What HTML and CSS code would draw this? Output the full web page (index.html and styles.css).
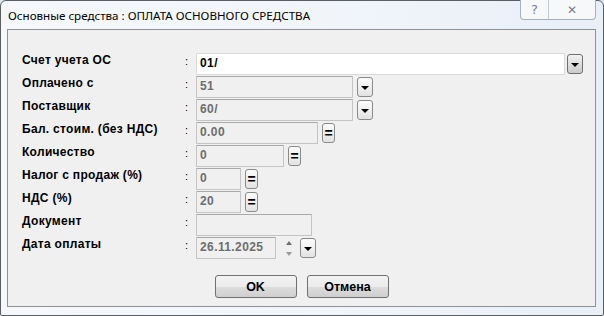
FILE: index.html
```html
<!DOCTYPE html>
<html lang="ru">
<head>
    <meta charset="UTF-8">
    <title>Основные средства : ОПЛАТА ОСНОВНОГО СРЕДСТВА</title>
    <link rel="stylesheet" href="styles.css">
</head>
<body>

<div class="window">
    <div class="titlebar">
        <span class="title">Основные средства : ОПЛАТА ОСНОВНОГО СРЕДСТВА</span>
        <div class="caption-buttons">
            <span class="cap-btn help">?</span>
            <span class="cap-btn close">✕</span>
        </div>
    </div>

    <div class="client">
        <div class="form">
            <div class="label">Счет учета ОС</div>
            <div class="colon">:</div>
            <div class="field">
                <div class="input active w-369">01/</div>
                <div class="btn drop dark gap2"><i class="tri"></i></div>
            </div>

            <div class="label">Оплачено с</div>
            <div class="colon">:</div>
            <div class="field">
                <div class="input w-157">51</div>
                <div class="btn drop"><i class="tri"></i></div>
            </div>

            <div class="label">Поставщик</div>
            <div class="colon">:</div>
            <div class="field">
                <div class="input w-157">60/</div>
                <div class="btn drop"><i class="tri"></i></div>
            </div>

            <div class="label">Бал. стоим. (без НДС)</div>
            <div class="colon">:</div>
            <div class="field">
                <div class="input w-122">0.00</div>
                <div class="btn calc">=</div>
            </div>

            <div class="label">Количество</div>
            <div class="colon">:</div>
            <div class="field">
                <div class="input w-88">0</div>
                <div class="btn calc">=</div>
            </div>

            <div class="label">Налог с продаж (%)</div>
            <div class="colon">:</div>
            <div class="field">
                <div class="input w-45">0</div>
                <div class="btn calc">=</div>
            </div>

            <div class="label">НДС (%)</div>
            <div class="colon">:</div>
            <div class="field">
                <div class="input w-45">20</div>
                <div class="btn calc">=</div>
            </div>

            <div class="label">Документ</div>
            <div class="colon">:</div>
            <div class="field">
                <div class="input w-116"></div>
            </div>

            <div class="label">Дата оплаты</div>
            <div class="colon">:</div>
            <div class="field">
                <div class="input w-80">26.11.2025</div>
                <div class="spin">
                    <i class="up"></i>
                    <i class="down"></i>
                </div>
                <div class="btn drop"><i class="tri"></i></div>
            </div>
        </div>

        <div class="actions">
            <button class="push">OK</button>
            <button class="push">Отмена</button>
        </div>
    </div>
</div>

</body>
</html>
```

FILE: styles.css
```css
html, body {
    margin: 0;
    padding: 0;
    background-color: #dde6ef;
}

.window {
    width: 604px;
    height: 316px;
    box-sizing: border-box;
    border: 1px solid #5a5f66;
    border-radius: 6px 6px 2px 2px;
    background: linear-gradient(to right, #f6f8fb 0%, #f1f5fa 55%, #e8eff7 100%);
    display: flex;
    flex-direction: column;
}

.titlebar {
    height: 28px;
    position: relative;
    display: flex;
    align-items: center;
}

.title {
    padding-left: 7px;
    padding-top: 1px;
    font-family: "Noto Sans", sans-serif;
    font-size: 11.6px;
    color: #000;
}

.caption-buttons {
    position: absolute;
    top: -1px;
    right: 7px;
    display: flex;
    height: 19px;
    border: 1px solid #a7b0bb;
    border-top: none;
    border-radius: 0 0 4px 4px;
    background-color: #f6f8fa;
}

.cap-btn {
    display: flex;
    align-items: center;
    justify-content: center;
    font-family: "DejaVu Sans", sans-serif;
    color: #7a7f86;
    font-size: 13px;
}

.help {
    width: 27px;
    border-right: 1px solid #c2c9d1;
}

.close {
    width: 46px;
    font-size: 12px;
}

.client {
    flex: 1;
    margin: 0 7px 8px 6px;
    border: 1px solid #8d9096;
    background-color: #f0f0f0;
    padding: 23px 0 0 14px;
}

.form {
    display: grid;
    grid-template-columns: 163px 11px 1fr;
    grid-auto-rows: 22px;
    row-gap: 1px;
}

.label {
    font-family: "Liberation Sans", Arial, sans-serif;
    font-weight: bold;
    font-size: 12px;
    letter-spacing: 0.3px;
    line-height: 14px;
    color: #000;
}

.colon {
    font-family: "Liberation Sans", Arial, sans-serif;
    font-size: 11px;
    line-height: 16px;
    color: #000;
}

.field {
    display: flex;
    align-items: center;
}

.input {
    box-sizing: border-box;
    height: 22px;
    border: 1px solid #c4c4c4;
    border-top-color: #a9a9a9;
    border-radius: 1px;
    background-color: #f0f0f0;
    padding: 0 3px;
    font-family: "Liberation Sans", Arial, sans-serif;
    font-weight: bold;
    font-size: 12px;
    letter-spacing: 0.4px;
    line-height: 19px;
    color: #6d6d6d;
}

.input.active {
    background-color: #fff;
    border-color: #dadada;
    color: #000;
}

.w-369 { width: 369px; }
.w-157 { width: 157px; }
.w-122 { width: 122px; }
.w-116 { width: 116px; }
.w-88 { width: 88px; }
.w-80 { width: 80px; }
.w-45 { width: 45px; }

.btn {
    box-sizing: border-box;
    height: 20px;
    margin-left: 4px;
    border: 1px solid #8a8a8a;
    border-radius: 3px;
    background: linear-gradient(to bottom, #fbfbfb 0%, #f0f0f0 50%, #e2e2e2 100%);
    display: flex;
    align-items: center;
    justify-content: center;
}

.btn.gap2 {
    margin-left: 2px;
}

.btn.dark {
    border-color: #6e6e6e;
    background: linear-gradient(to bottom, #f2f2f2 0%, #dedede 50%, #cbcbcb 100%);
}

.drop {
    width: 16px;
}

.tri {
    display: block;
    width: 0;
    height: 0;
    margin-top: 2px;
    border-left: 4px solid transparent;
    border-right: 4px solid transparent;
    border-top: 4px solid #000;
}

.calc {
    width: 13px;
    font-family: "Liberation Sans", Arial, sans-serif;
    font-weight: bold;
    font-size: 14px;
    line-height: 1;
    color: #000;
}

.spin {
    width: 15px;
    height: 22px;
    margin-left: 5px;
    display: flex;
    flex-direction: column;
    align-items: center;
    justify-content: space-between;
    padding: 4px 0 3px;
    box-sizing: border-box;
}

.spin .up {
    width: 0;
    height: 0;
    border-left: 3px solid transparent;
    border-right: 3px solid transparent;
    border-bottom: 4px solid #6f6f6f;
}

.spin .down {
    width: 0;
    height: 0;
    border-left: 3px solid transparent;
    border-right: 3px solid transparent;
    border-top: 4px solid #9a9a9a;
}

.actions {
    display: flex;
    justify-content: center;
    gap: 10px;
    margin: 16px 14px 0 0;
}

.push {
    width: 82px;
    height: 23px;
    border: 1px solid #707070;
    border-radius: 3px;
    background: linear-gradient(to bottom, #f2f2f2 0%, #ebebeb 50%, #dddddd 51%, #cfcfcf 100%);
    font-family: "Liberation Sans", Arial, sans-serif;
    font-weight: bold;
    font-size: 12.5px;
    color: #000;
    padding: 0;
}
```
